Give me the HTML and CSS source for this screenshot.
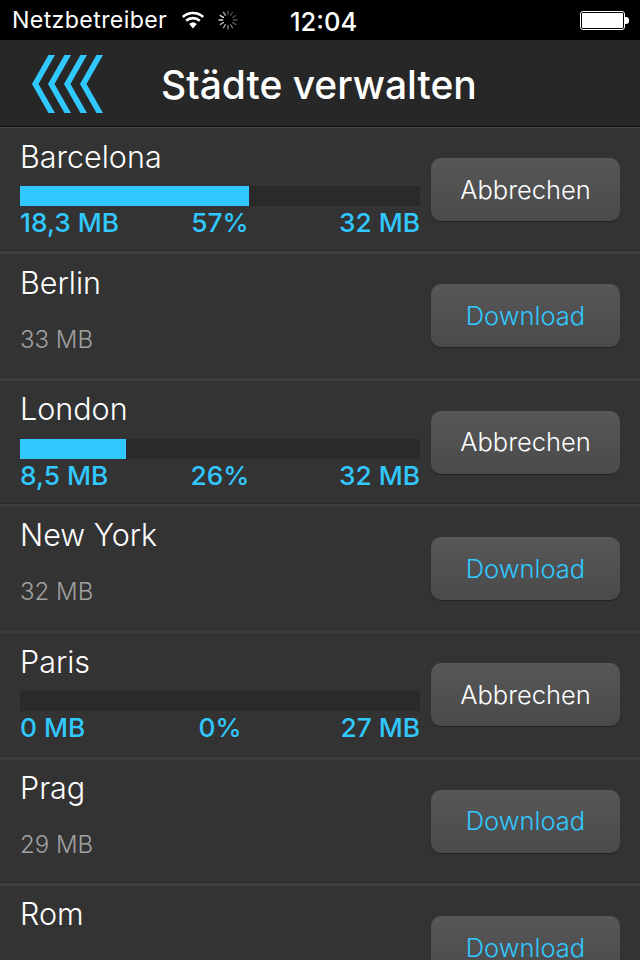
FILE: index.html
```html
<!DOCTYPE html>
<html lang="de">
<head>
<meta charset="utf-8">
<title>Städte verwalten</title>
<link rel="stylesheet" href="styles.css">
</head>
<body>
<div class="app">
  <div class="status">
    <div class="status-left">
      <span class="carrier">Netzbetreiber</span>
      <svg class="wifi" width="24" height="18" viewBox="0 0 24 18"><path d="M12 17.5 8.2 13a5.8 5.8 0 0 1 7.6 0Z" fill="#fff"/><path d="M5.2 9.8a10 10 0 0 1 13.6 0M1.8 6a15 15 0 0 1 20.4 0" fill="none" stroke="#fff" stroke-width="2.6"/></svg>
      <svg class="spin" width="20" height="20" viewBox="0 0 20 20" stroke-width="1.4" stroke-linecap="round"><g stroke="#fff"><path d="M10 1v3.6" opacity=".3"/><path d="M14.5 2.2l-1.8 3.1" opacity=".25"/><path d="M17.8 5.5l-3.1 1.8" opacity=".25"/><path d="M19 10h-3.6" opacity=".3"/><path d="M17.8 14.5l-3.1-1.8" opacity=".35"/><path d="M14.5 17.8l-1.8-3.1" opacity=".4"/><path d="M10 19v-3.6" opacity=".5"/><path d="M5.5 17.8l1.8-3.1" opacity=".6"/><path d="M2.2 14.5l3.1-1.8" opacity=".7"/><path d="M1 10h3.6" opacity=".85"/><path d="M2.2 5.5l3.1 1.8" opacity=".95"/><path d="M5.5 2.2l1.8 3.1" opacity=".6"/></g></svg>
    </div>
    <span class="clock">12:04</span>
    <div class="battery"><div class="battery-body"><div class="battery-fill"></div></div><div class="battery-tip"></div></div>
  </div>
  <header class="nav">
    <svg class="back" width="72" height="58" viewBox="0 0 72 58"><g fill="#30c8ff"><path d="M16.5 0H23L6.5 29 23 58h-6.5L0 29Z"/><path d="M32.5 0H39L22.5 29 39 58h-6.5L16 29Z"/><path d="M48.500 0H55L38.500 29 55 58h-6.500L32 29Z"/><path d="M64.500 0H71L54.500 29 71 58h-6.500L48 29Z"/></g></svg>
    <h1 class="title">Städte verwalten</h1>
  </header>
  <main class="list">
    <section class="row">
      <div class="info">
        <div class="city">Barcelona</div>
        <div class="track"><div class="fill" style="width:57.25%"></div></div>
        <div class="stats"><span>18,3 MB</span><span>57%</span><span class="end">32 MB</span></div>
      </div>
      <button class="btn">Abbrechen</button>
    </section>
    <section class="row">
      <div class="info">
        <div class="city">Berlin</div>
        <div class="size">33 MB</div>
      </div>
      <button class="btn dl">Download</button>
    </section>
    <section class="row">
      <div class="info">
        <div class="city">London</div>
        <div class="track"><div class="fill" style="width:26.5%"></div></div>
        <div class="stats"><span>8,5 MB</span><span>26%</span><span class="end">32 MB</span></div>
      </div>
      <button class="btn">Abbrechen</button>
    </section>
    <section class="row">
      <div class="info">
        <div class="city">New York</div>
        <div class="size">32 MB</div>
      </div>
      <button class="btn dl">Download</button>
    </section>
    <section class="row">
      <div class="info">
        <div class="city">Paris</div>
        <div class="track"></div>
        <div class="stats"><span>0 MB</span><span>0%</span><span class="end">27 MB</span></div>
      </div>
      <button class="btn">Abbrechen</button>
    </section>
    <section class="row">
      <div class="info">
        <div class="city">Prag</div>
        <div class="size">29 MB</div>
      </div>
      <button class="btn dl">Download</button>
    </section>
    <section class="row">
      <div class="info">
        <div class="city">Rom</div>
      </div>
      <button class="btn dl">Download</button>
    </section>
  </main>
</div>
</body>
</html>
```
FILE: styles.css
```css
* { box-sizing: border-box; }
html, body { margin: 0; padding: 0; background: #333; }
body { width: 640px; height: 960px; overflow: hidden; font-family: Inter, "Liberation Sans", sans-serif; color: #fff; }
.app { width: 640px; height: 960px; overflow: hidden; display: flex; flex-direction: column; }
.status { height: 40px; flex: none; background: #000; display: flex; align-items: center; padding: 0 11px 0 12px; position: relative; }
.status-left { display: flex; align-items: center; gap: 13px; flex: 1; }
.carrier { font-size: 23.2px; font-weight: 400; letter-spacing: .35px; }
.wifi { margin-left: 1px; }
.clock { font-size: 25.5px; font-weight: 500; position: absolute; left: 290px; top: 6px; }
.battery { display: flex; align-items: center; }
.battery-body { width: 45px; height: 19px; border: 1px solid #fff; border-radius: 3px; padding: 1px; }
.battery-fill { height: 100%; background: #fff; border-radius: 1px; }
.battery-tip { width: 4px; height: 7px; background: #fff; border-radius: 0 3px 3px 0; }
.nav { height: 88px; flex: none; background: #272727; border-bottom: 1px solid #4a4a4a; display: flex; align-items: center; box-shadow: inset 0 -1px 0 #0c0c0c; }
.back { margin-left: 32px; flex: none; }
.title { margin: 3px 0 0 57px; font-size: 39px; font-weight: 500; line-height: 44px; }
.list { flex: 1; min-height: 0; }
.row { height: 126.33px; flex: none; display: flex; align-items: flex-start; padding: 0 20px; background: #333; border-bottom: 3px solid #3d3d3d; box-shadow: inset 0 -1px 0 #2b2b2b; position: relative; }
.info { width: 400px; flex: none; }
.city { font-size: 30.5px; font-weight: 300; line-height: 36px; margin-top: 10.5px; }
.track { height: 20px; background: #2a2a2a; margin-top: 11.5px; }
.fill { height: 100%; background: #30c8ff; }
.stats { display: grid; grid-template-columns: 1fr auto 1fr; color: #30c8ff; font-size: 26.3px; font-weight: 500; line-height: 30px; margin-top: 2px; }
.end { text-align: right; }
.size { font-size: 24px; font-weight: 300; color: #a0a0a0; line-height: 28px; margin-top: 25px; }
.btn { margin: 30px 0 0 11px; width: 189px; height: 63px; flex: none; border: none; border-radius: 10px; background: linear-gradient(#575757, #4a4a4a); box-shadow: 0 1px 1px #222; color: #fff; font-family: inherit; font-size: 25.5px; font-weight: 300; padding: 0 0 .7px; }
.dl { color: #30c8ff; }
```
